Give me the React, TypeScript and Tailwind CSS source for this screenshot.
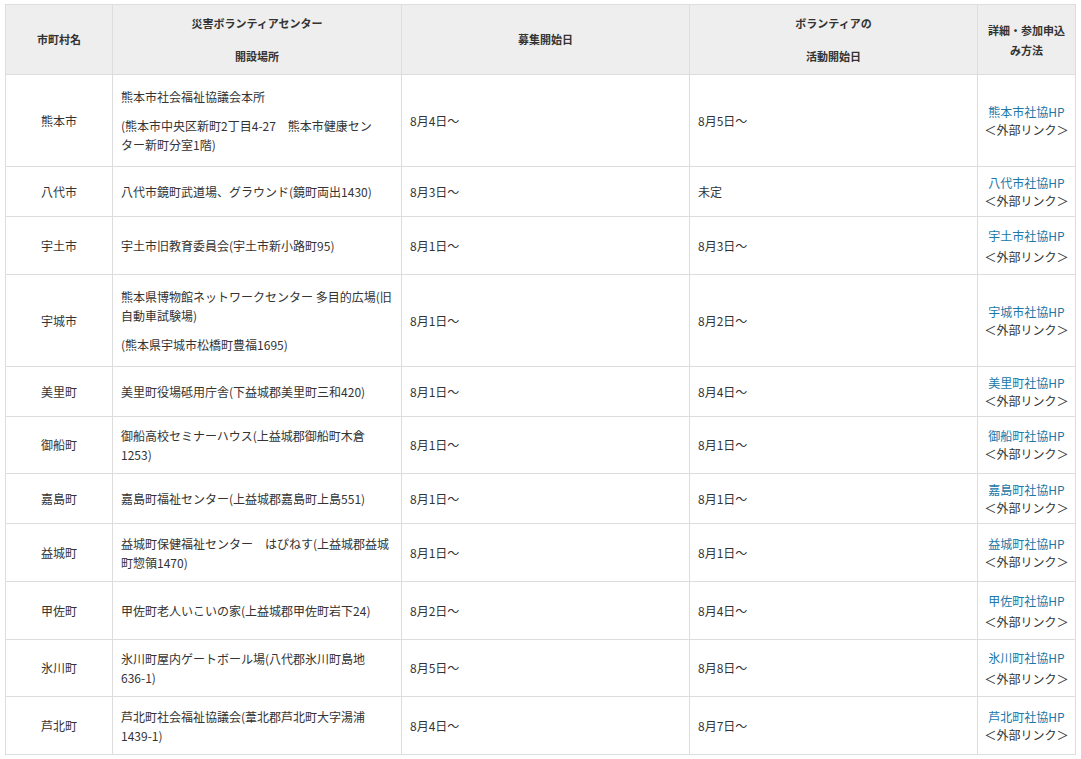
type Row = { city: string; place: string[]; start: string; act: string; h: number; gap?: boolean }

const rows: Row[] = [
  { city: '熊本市', place: ['熊本市社会福祉協議会本所', '(熊本市中央区新町2丁目4-27\u3000熊本市健康セン|ター新町分室1階)'], start: '8月4日～', act: '8月5日～', h: 92 },
  { city: '八代市', place: ['八代市鏡町武道場、グラウンド(鏡町両出1430)'], start: '8月3日～', act: '未定', h: 50 },
  { city: '宇土市', place: ['宇土市旧教育委員会(宇土市新小路町95)'], start: '8月1日～', act: '8月3日～', h: 58, gap: true },
  { city: '宇城市', place: ['熊本県博物館ネットワークセンター 多目的広場(旧|自動車試験場)', '(熊本県宇城市松橋町豊福1695)'], start: '8月1日～', act: '8月2日～', h: 92 },
  { city: '美里町', place: ['美里町役場砥用庁舎(下益城郡美里町三和420)'], start: '8月1日～', act: '8月4日～', h: 50 },
  { city: '御船町', place: ['御船高校セミナーハウス(上益城郡御船町木倉|1253)'], start: '8月1日～', act: '8月1日～', h: 57 },
  { city: '嘉島町', place: ['嘉島町福祉センター(上益城郡嘉島町上島551)'], start: '8月1日～', act: '8月1日～', h: 50 },
  { city: '益城町', place: ['益城町保健福祉センター\u3000はぴねす(上益城郡益城|町惣領1470)'], start: '8月1日～', act: '8月1日～', h: 58 },
  { city: '甲佐町', place: ['甲佐町老人いこいの家(上益城郡甲佐町岩下24)'], start: '8月2日～', act: '8月4日～', h: 58, gap: true },
  { city: '氷川町', place: ['氷川町屋内ゲートボール場(八代郡氷川町島地|636-1)'], start: '8月5日～', act: '8月8日～', h: 57, gap: true },
  { city: '芦北町', place: ['芦北町社会福祉協議会(葦北郡芦北町大字湯浦|1439-1)'], start: '8月4日～', act: '8月7日～', h: 58 },
]

const font = { fontFamily: '"Noto Sans CJK JP", "Liberation Sans", sans-serif' }

export default function App() {
  return (
    <div className="bg-white pl-[5px] pt-[4px] text-[12px] text-[#333]" style={font}>
      <table className="w-[1070px] table-fixed border-collapse">
        <colgroup>
          <col className="w-[107px]" />
          <col className="w-[289px]" />
          <col className="w-[288px]" />
          <col className="w-[288px]" />
          <col className="w-[98px]" />
        </colgroup>
        <thead>
          <tr className="h-[70px] bg-[#eeeeee] text-[11px] font-bold">
            <th className="border border-[#dddddd]">市町村名</th>
            <th className="border border-[#dddddd] leading-[33px]">災害ボランティアセンター<br />開設場所</th>
            <th className="border border-[#dddddd]">募集開始日</th>
            <th className="border border-[#dddddd] leading-[33px]">ボランティアの<br />活動開始日</th>
            <th className="border border-[#dddddd] leading-[20px]">詳細・参加申込<br />み方法</th>
          </tr>
        </thead>
        <tbody>
          {rows.map((r) => (
            <tr key={r.city} style={{ height: r.h }}>
              <td className="border border-[#dddddd] text-center">{r.city}</td>
              <td className="border border-[#dddddd] px-2 leading-[19px]">
                {r.place.map((p, i) => (
                  <p key={i} className={i > 0 ? 'mt-[10px]' : ''}>
                    {p.split('|').map((s, j) => (
                      <span key={j} className="block">{s}</span>
                    ))}
                  </p>
                ))}
              </td>
              <td className="border border-[#dddddd] px-2">{r.start}</td>
              <td className="border border-[#dddddd] px-2">{r.act}</td>
              <td className={`border border-[#dddddd] text-center ${r.gap ? 'leading-[21px]' : 'leading-[18px]'}`}>
                <a className="block text-[#2077a8]">{r.city}社協HP</a>
                <span className="block">＜外部リンク＞</span>
              </td>
            </tr>
          ))}
        </tbody>
      </table>
    </div>
  )
}
